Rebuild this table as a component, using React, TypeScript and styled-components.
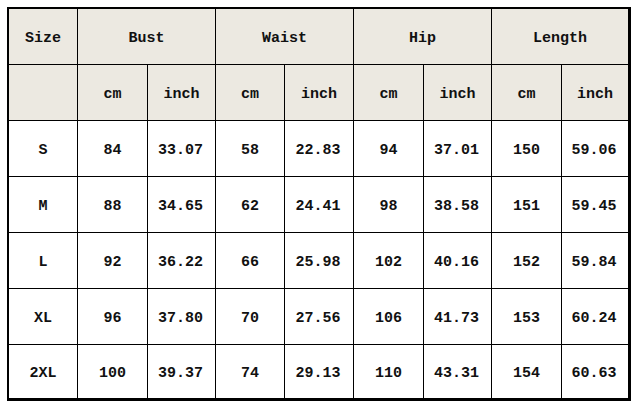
import React from 'react'
import styled, { createGlobalStyle } from 'styled-components'

const GlobalStyle = createGlobalStyle`
  html, body {
    margin: 0;
    padding: 0;
    background: #ffffff;
  }
`

const measures = ['Bust', 'Waist', 'Hip', 'Length']

const rows = [
  { size: 'S', values: ['84', '33.07', '58', '22.83', '94', '37.01', '150', '59.06'] },
  { size: 'M', values: ['88', '34.65', '62', '24.41', '98', '38.58', '151', '59.45'] },
  { size: 'L', values: ['92', '36.22', '66', '25.98', '102', '40.16', '152', '59.84'] },
  { size: 'XL', values: ['96', '37.80', '70', '27.56', '106', '41.73', '153', '60.24'] },
  { size: '2XL', values: ['100', '39.37', '74', '29.13', '110', '43.31', '154', '60.63'] },
]

function App() {
  return (
    <>
      <GlobalStyle />
      <Page>
        <SizeChart>
          <Cell $head>Size</Cell>
          {measures.map(m => (
            <Cell key={m} $head $span={2}>{m}</Cell>
          ))}

          <Cell $head />
          {measures.map(m => (
            <React.Fragment key={m}>
              <Cell $head>cm</Cell>
              <Cell $head>inch</Cell>
            </React.Fragment>
          ))}

          {rows.map(r => (
            <React.Fragment key={r.size}>
              <Cell>{r.size}</Cell>
              {r.values.map((v, i) => (
                <Cell key={i} $shift={i % 2 === 1}>{v}</Cell>
              ))}
            </React.Fragment>
          ))}
        </SizeChart>
      </Page>
    </>
  )
}

const Page = styled.div`
  padding: 7px 0 0 7px;
`

const SizeChart = styled.div`
  display: grid;
  grid-template-columns: 68px 69px 67px 68px 68px 69px 67px 69px 66px;
  grid-template-rows: repeat(6, 55px) 53px;
  gap: 1px;
  width: max-content;
  background: #000;
  border-style: solid;
  border-color: #000;
  border-width: 2px 3px 3px 2px;
  font-family: "Liberation Mono", "DejaVu Sans Mono", monospace;
  font-weight: bold;
  font-size: 15px;
  color: #111;
`

const Cell = styled.div<{ $head?: boolean; $span?: number; $shift?: boolean }>`
  grid-column: ${p => (p.$span ? `span ${p.$span}` : 'auto')};
  display: flex;
  align-items: center;
  justify-content: center;
  padding-top: 3px;
  padding-right: ${p => (p.$shift ? '2px' : '0')};
  background: ${p => (p.$head ? '#ece9e1' : '#ffffff')};
  white-space: nowrap;
`

export default App
